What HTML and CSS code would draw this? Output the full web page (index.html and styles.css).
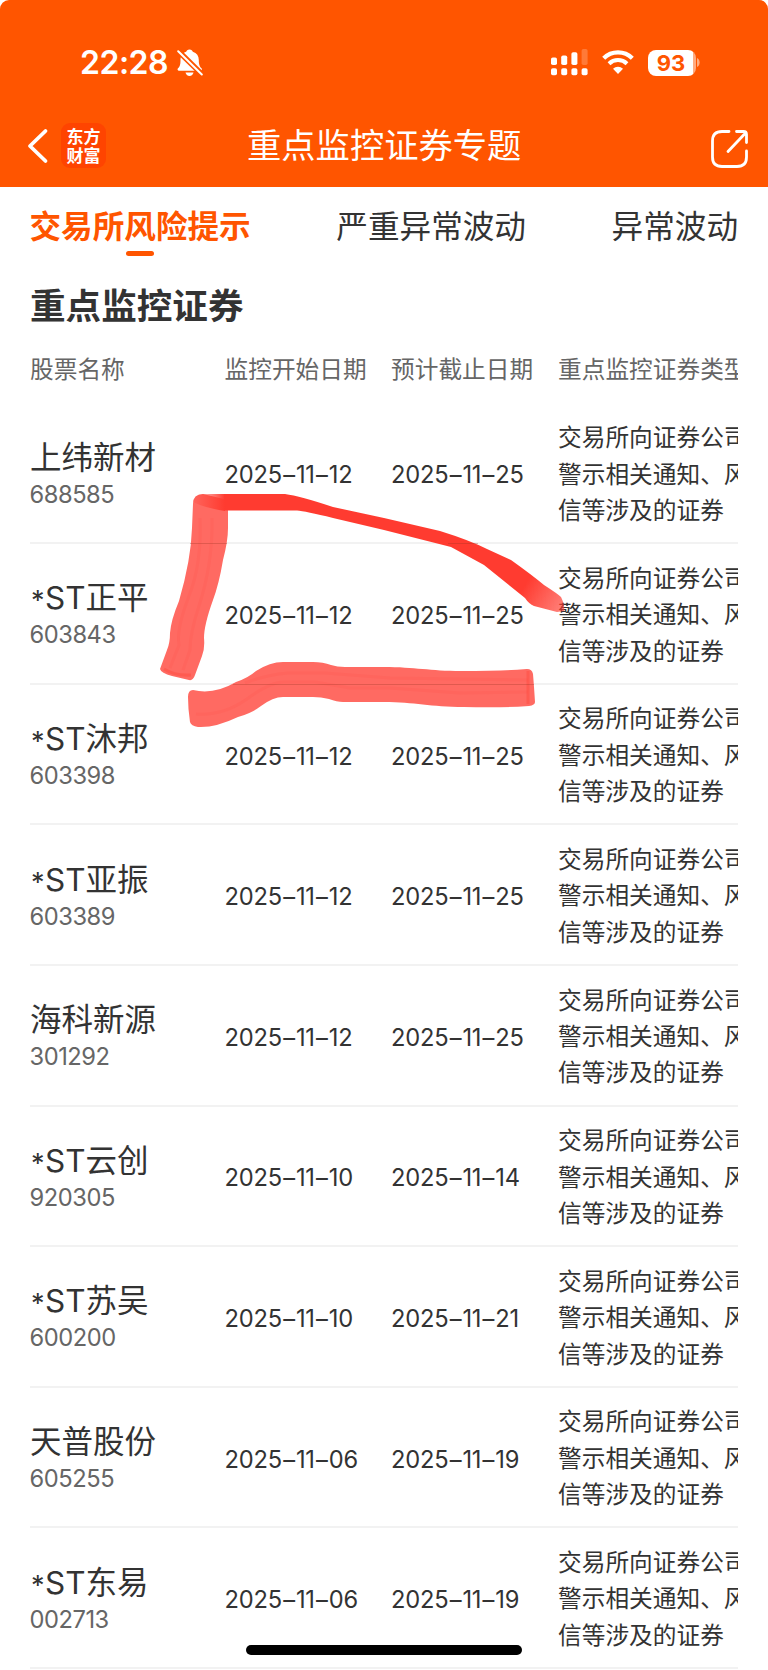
FILE: index.html
```
<!DOCTYPE html>
<html lang="zh-CN">
<head>
  <meta charset="utf-8">
  <title>重点监控证券专题</title>
  <link rel="stylesheet" href="styles.css">
</head>
<body>
  <div class="page">
    <header class="header">
      <div class="status">
        <div class="status-left">
          <span class="time">22:28</span>
          <svg class="bell" width="26" height="28" viewBox="0 0 26 28">
            <path d="M12.500 .5c1.900 0 3 1.100 3.300 2.300 4 1.300 6 4.200 6 8.200 0 5 1 6.500 2.700 8.300.8.9.5 2.500-1 2.500H2c-1.500 0-1.900-1.600-1-2.500C2.800 17.500 3.500 16 3.500 11c0-4 1.800-6.900 5.700-8.200C9.500 1.600 10.600.5 12.500.5z" fill="#fff"/>
            <path d="M8.500 23.500h8c-.4 2-1.900 3.400-4 3.400s-3.600-1.400-4-3.400z" fill="#fff"/>
            <path d="M1.200 2l24 23.500" stroke="#ff5500" stroke-width="5.500"/>
            <path d="M1.200 2.200l23.600 23.300" stroke="#fff" stroke-width="2" stroke-linecap="round"/>
          </svg>
        </div>
        <div class="status-right">
          <svg width="38" height="27" viewBox="0 0 38 27" fill="#fff">
            <rect x="0" y="8.500" width="6" height="7.500" rx="1.800"/>
            <rect x="10.200" y="6.500" width="6" height="9.500" rx="1.800"/>
            <rect x="20.400" y="3.200" width="6" height="12.800" rx="1.800"/>
            <rect x="30.600" y="0" width="6" height="16" rx="1.800" opacity=".22"/>
            <rect x="0" y="19.300" width="6" height="7" rx="1.800"/>
            <rect x="10.200" y="19.300" width="6" height="7" rx="1.800"/>
            <rect x="20.400" y="19.300" width="6" height="7" rx="1.800"/>
            <rect x="30.600" y="19.300" width="6" height="7" rx="1.800"/>
          </svg>
          <svg class="wifi" width="32" height="25" viewBox="0 0 32 25">
            <path d="M1.700 8.200a20.500 20.500 0 0 1 28.600 0" fill="none" stroke="#fff" stroke-width="4.300"/>
            <path d="M7 13.700a13 13 0 0 1 18 0" fill="none" stroke="#fff" stroke-width="4"/>
            <path d="M16 24l-5-5.200a7.300 7.300 0 0 1 10 0z" fill="#fff"/>
          </svg>
          <div class="battery"><span>93</span></div>
          <svg class="cap" width="3" height="9" viewBox="0 0 3 9"><path d="M0 0c3.500 1.500 3.500 7.500 0 9z" fill="#fff" opacity=".5"/></svg>
        </div>
      </div>
      <div class="nav">
        <svg class="back" width="22" height="36" viewBox="0 0 22 36"><path d="M18.500 3L3 18l15.500 15" fill="none" stroke="#fff" stroke-width="3.800" stroke-linecap="round" stroke-linejoin="round"/></svg>
        <div class="logo">东方<br>财富</div>
        <h1 class="title">重点监控证券专题</h1>
        <svg class="share" width="40" height="40" viewBox="0 0 40 40" fill="none" stroke="#fff" stroke-width="2.800" stroke-linecap="round" stroke-linejoin="round">
          <path d="M19 2.500h-7C5.500 2.500 2.500 6 2.500 12v16c0 6 3 9.500 9.500 9.500h15c6.500 0 9.500-3.500 9.500-9.500v-6"/>
          <path d="M26.500 2.500h7q3 0 3 3v8M36 3.500L18 22.500"/>
        </svg>
      </div>
    </header>

    <nav class="tabs">
      <a class="tab active">交易所风险提示</a>
      <a class="tab">严重异常波动</a>
      <a class="tab">异常波动</a>
    </nav>

    <h2 class="section-title">重点监控证券</h2>

    <div class="table">
      <div class="row head">
        <div>股票名称</div><div>监控开始日期</div><div>预计截止日期</div><div>重点监控证券类型</div>
      </div>
      <div class="row">
        <div><p class="name">上纬新材</p><p class="code">688585</p></div>
        <div class="date">2025<b>–</b>11<b>–</b>12</div><div class="date">2025<b>–</b>11<b>–</b>25</div>
        <div class="type">交易所向证券公司<br>警示相关通知、风<br>信等涉及的证券</div>
      </div>
      <div class="row">
        <div><p class="name"><i>*</i>ST正平</p><p class="code">603843</p></div>
        <div class="date">2025<b>–</b>11<b>–</b>12</div><div class="date">2025<b>–</b>11<b>–</b>25</div>
        <div class="type">交易所向证券公司<br>警示相关通知、风<br>信等涉及的证券</div>
      </div>
      <div class="row">
        <div><p class="name"><i>*</i>ST沐邦</p><p class="code">603398</p></div>
        <div class="date">2025<b>–</b>11<b>–</b>12</div><div class="date">2025<b>–</b>11<b>–</b>25</div>
        <div class="type">交易所向证券公司<br>警示相关通知、风<br>信等涉及的证券</div>
      </div>
      <div class="row">
        <div><p class="name"><i>*</i>ST亚振</p><p class="code">603389</p></div>
        <div class="date">2025<b>–</b>11<b>–</b>12</div><div class="date">2025<b>–</b>11<b>–</b>25</div>
        <div class="type">交易所向证券公司<br>警示相关通知、风<br>信等涉及的证券</div>
      </div>
      <div class="row">
        <div><p class="name">海科新源</p><p class="code">301292</p></div>
        <div class="date">2025<b>–</b>11<b>–</b>12</div><div class="date">2025<b>–</b>11<b>–</b>25</div>
        <div class="type">交易所向证券公司<br>警示相关通知、风<br>信等涉及的证券</div>
      </div>
      <div class="row">
        <div><p class="name"><i>*</i>ST云创</p><p class="code">920305</p></div>
        <div class="date">2025<b>–</b>11<b>–</b>10</div><div class="date">2025<b>–</b>11<b>–</b>14</div>
        <div class="type">交易所向证券公司<br>警示相关通知、风<br>信等涉及的证券</div>
      </div>
      <div class="row">
        <div><p class="name"><i>*</i>ST苏吴</p><p class="code">600200</p></div>
        <div class="date">2025<b>–</b>11<b>–</b>10</div><div class="date">2025<b>–</b>11<b>–</b>21</div>
        <div class="type">交易所向证券公司<br>警示相关通知、风<br>信等涉及的证券</div>
      </div>
      <div class="row">
        <div><p class="name">天普股份</p><p class="code">605255</p></div>
        <div class="date">2025<b>–</b>11<b>–</b>06</div><div class="date">2025<b>–</b>11<b>–</b>19</div>
        <div class="type">交易所向证券公司<br>警示相关通知、风<br>信等涉及的证券</div>
      </div>
      <div class="row">
        <div><p class="name"><i>*</i>ST东易</p><p class="code">002713</p></div>
        <div class="date">2025<b>–</b>11<b>–</b>06</div><div class="date">2025<b>–</b>11<b>–</b>19</div>
        <div class="type">交易所向证券公司<br>警示相关通知、风<br>信等涉及的证券</div>
      </div>
    </div>

    <!-- marker strokes -->
    <svg class="marks" width="768" height="1670" viewBox="0 0 768 1670">
      <defs>
        <linearGradient id="fade" gradientUnits="userSpaceOnUse" x1="525" y1="585" x2="563" y2="608">
          <stop offset="0" stop-color="#ff3b30"/>
          <stop offset="1" stop-color="#ff3b30" stop-opacity=".65"/>
        </linearGradient>
        <linearGradient id="start" gradientUnits="userSpaceOnUse" x1="192" y1="0" x2="225" y2="0">
          <stop offset="0" stop-color="#ff3b30" stop-opacity=".1"/>
          <stop offset="1" stop-color="#ff3b30"/>
        </linearGradient>
      </defs>
      <g class="ink">
        <path fill="#ff6a62" d="M193 504Q193 494 203 494L228 500V528Q228 541 223 560Q219 584 213 600Q204 625 204 638Q205 648 202 656L195 675Q193 681 189 680L172 676Q161 673 160 669L167 650Q170 643 170 633Q171 620 179 601Q191 560 192 528Z"/>
        <path fill="#ff6a62" d="M188 697Q188 690 193 690Q214 695 236 682Q248 678 256 671Q270 662 283 662H313Q323 662 331 665Q337 667 345 667H384C415 667 430 671 461 671Q502 671 527 669Q532 669 533 674Q534 686 535 702Q535 705 529 706Q500 708 464 707C430 707 415 702 384 702H343Q337 702 329 699Q321 697 313 697H283Q273 697 261 706Q252 713 238 717Q215 728 198 727Q191 726 190 722Q188 709 188 697Z"/>
        <g fill="none" stroke="#ff453a" stroke-opacity=".13" stroke-width="3">
          <path d="M200 518Q202 563 189 596Q176 630 179 645L170 668M212 518Q213 563 199 606Q190 633 190 650L183 670"/>
          <path d="M196 714Q223 716 247 699Q271 681 286 682H315L350 688H390L460 693L528 692M245 683Q265 675 288 673H325L390 678L528 680"/>
        </g>
        <path fill="none" stroke="#ff453a" stroke-opacity=".4" stroke-width="3" d="M164 669Q175 676 191 675M528 671V704"/>
        <path fill="url(#start)" d="M193 502Q195 494 203 494H225V511Q205 508 193 502Z"/>
        <path fill="url(#fade)" d="M224.500 494H285Q300 496 333 507L384 518L440 531Q469 540 487 549L511 560Q532 575 544 585Q558 594 561 597Q565 605 564 611L557 612L534 606Q529 604 525 598L484 565L451 547L384 530L333 518Q305 511 297 510.500H224.500Z"/>
      </g>
      <path fill="none" stroke="#932" stroke-opacity=".3" d="M190 543.500H227M448 543.500H478M233 684.500H534"/>
    </svg>

    <div class="home-bar"></div>
  </div>
</body>
</html>
```
FILE: styles.css
```
* {
  box-sizing: border-box;
}

body {
  margin: 0;
  background: #fff;
  color: #333;
  font-family: Inter, "Noto Sans CJK SC", sans-serif;
}

h1, h2, p {
  margin: 0;
  font-weight: 400;
}

.page {
  position: relative;
  width: 768px;
  height: 1670px;
  overflow: hidden;
}

.header {
  height: 187px;
  background: #ff5500;
  color: #fff;
  border-radius: 9px 9px 0 0;
}

.status {
  display: flex;
  justify-content: space-between;
  align-items: center;
  height: 125px;
  padding: 0 68px 0 80px;
}

.status-left, .status-right {
  display: flex;
  align-items: center;
}

.time {
  width: 97px;
  font-size: 32px;
  font-weight: 600;
  letter-spacing: -0.500px;
}

.wifi {
  margin: 0 14px 0 13px;
}

.battery {
  width: 48px;
  height: 26px;
  border-radius: 8px;
  background: linear-gradient(to right, #fff 45px, #ffaa80 45px);
  color: #ff5500;
  font-size: 22px;
  font-weight: 700;
  line-height: 27px;
  text-align: center;
}

.battery span {
  margin-right: 2px;
}

.cap {
  margin-left: 1px;
}

.nav {
  display: flex;
  align-items: center;
  height: 41px;
  padding: 0 18px 0 27px;
}

.logo {
  width: 45px;
  height: 45px;
  margin-left: 12px;
  padding-top: 3px;
  border-radius: 9px;
  background: #ff4400;
  font-family: "Noto Sans CJK SC", sans-serif;
  font-size: 17px;
  font-weight: 700;
  line-height: 19px;
  text-align: center;
}

.title {
  margin: 0 auto 0 141px;
  font-size: 34.300px;
  line-height: 40px;
}

.share {
  margin-top: 6px;
}

.tabs {
  display: flex;
  justify-content: space-between;
  height: 71px;
  padding: 16px 30px 0 29.500px;
}

.tab {
  font-size: 31.600px;
  line-height: 48px;
}

.tab.active {
  color: #ff5500;
  font-weight: 700;
}

.tab.active::after {
  content: "";
  display: block;
  width: 28px;
  height: 5px;
  margin: 0 auto;
  border-radius: 3px;
  background: #ff5500;
}

.section-title {
  height: 87px;
  padding-left: 30px;
  font-size: 35.600px;
  font-weight: 700;
  line-height: 98px;
}

.table {
  width: 708px;
  margin-left: 30px;
  overflow: hidden;
}

.row {
  display: grid;
  grid-template-columns: 194.500px 166.500px 167px 200px;
  align-items: center;
  height: 140.620px;
  padding-top: 4px;
  border-bottom: 2px solid #f2f2f2;
  white-space: nowrap;
}

.row.head {
  height: 58.500px;
  padding: 0 0 12px;
  border: 0;
  color: #666;
  font-size: 23.700px;
}

.name {
  font-size: 31.500px;
  line-height: 40px;
}

/* the star is drawn smaller than the letters */
.name i {
  display: inline-block;
  width: 15px;
  padding-left: 1px;
  font-size: 27px;
  font-style: normal;
  line-height: 30px;
  vertical-align: -1px;
}

.code {
  margin-left: -0.500px;
  color: #666;
  font-size: 23.700px;
  font-weight: 370;
  line-height: 34px;
  letter-spacing: -0.450px;
}

.date {
  font-size: 23.700px;
  font-weight: 380;
  letter-spacing: -0.200px;
}

.date b {
  margin: 0 1px 0 1.300px;
  font-weight: 380;
}

.type {
  font-size: 23.700px;
  line-height: 36.400px;
}

.marks {
  position: absolute;
  left: 0;
  top: 0;
}

.ink {
  filter: blur(0.600px);
}

.home-bar {
  position: absolute;
  left: 246px;
  bottom: 15px;
  width: 276px;
  height: 10px;
  border-radius: 5px;
  background: #000;
}
```
